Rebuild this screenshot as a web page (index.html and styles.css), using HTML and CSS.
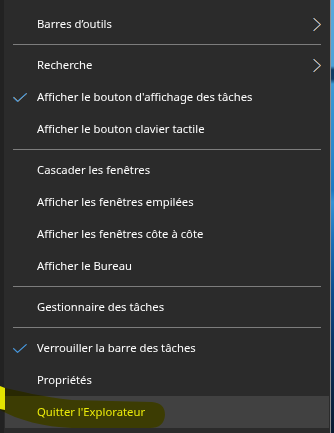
FILE: index.html
```html
<!DOCTYPE html>
<html lang="fr">
<head>
<meta charset="utf-8">
<title>Menu barre des tâches</title>
<link rel="stylesheet" href="styles.css">
</head>
<body>
<div class="screen">
  <div class="edge"></div>
  <div class="menu">
    <div class="item"><span class="icon"></span><span class="label">Barres d’outils</span>
      <svg class="chev" width="8" height="13" viewBox="0 0 8 13"><polyline class="cb" points="0.5,0.5 7,6.5 0.5,12.5"/><polyline class="co" points="1.3,0.5 7.8,6.5 1.3,12.5"/><polyline class="cw" points="0.9,0.5 7.4,6.5 0.9,12.5"/></svg>
    </div>
    <div class="sep"></div>
    <div class="item"><span class="icon"></span><span class="label">Recherche</span>
      <svg class="chev" width="8" height="13" viewBox="0 0 8 13"><polyline class="cb" points="0.5,0.5 7,6.5 0.5,12.5"/><polyline class="co" points="1.3,0.5 7.8,6.5 1.3,12.5"/><polyline class="cw" points="0.9,0.5 7.4,6.5 0.9,12.5"/></svg>
    </div>
    <div class="item"><span class="icon">
      <svg class="check" width="14" height="9" viewBox="0 0 14 9"><polyline class="ko" points="1.2,4.5 5.2,8.3 13.8,0.5"/><polyline class="kb" points="0.5,4.6 4.5,8.4 13.2,0.6"/></svg>
    </span><span class="label">Afficher le bouton d'affichage des tâches</span></div>
    <div class="item"><span class="icon"></span><span class="label">Afficher le bouton clavier tactile</span></div>
    <div class="sep"></div>
    <div class="item"><span class="icon"></span><span class="label">Cascader les fenêtres</span></div>
    <div class="item"><span class="icon"></span><span class="label">Afficher les fenêtres empilées</span></div>
    <div class="item"><span class="icon"></span><span class="label">Afficher les fenêtres côte à côte</span></div>
    <div class="item"><span class="icon"></span><span class="label">Afficher le Bureau</span></div>
    <div class="sep"></div>
    <div class="item"><span class="icon"></span><span class="label">Gestionnaire des tâches</span></div>
    <div class="sep"></div>
    <div class="item"><span class="icon">
      <svg class="check" width="14" height="9" viewBox="0 0 14 9"><polyline class="ko2" points="1.0,4.5 5.0,8.3 13.6,0.5"/><polyline class="kb" points="0.5,4.6 4.5,8.4 13.2,0.6"/></svg>
    </span><span class="label">Verrouiller la barre des tâches</span></div>
    <div class="item"><span class="icon"></span><span class="label">Propriétés</span></div>
    <div class="item hover"><span class="icon"></span><span class="label">Quitter l'Explorateur</span></div>
  </div>
  <div class="wall"></div>
  <svg class="marker" width="334" height="433" viewBox="0 0 334 433"><path d="M0,387 C20,391 42,397 72,400 L152,402 Q165,403 165,415 Q164,428 150,428 L72,428 C44,427 18,420 0,410 Z"/></svg>
  <svg class="marker-edge" width="5" height="433" viewBox="0 0 5 433"><path d="M0,386 L5,388 L5,410 L0,409 Z"/></svg>
</div>
</body>
</html>
```

FILE: styles.css
```css
html, body {
  margin: 0;
  padding: 0;
  background: #2b2b2b;
}

.screen {
  position: relative;
  display: flex;
  width: 334px;
  height: 433px;
  overflow: hidden;
  font-family: "Noto Sans", "Open Sans", "DejaVu Sans", sans-serif;
  font-size: 11.3px;
  color: #ffffff;
}

.edge {
  width: 4px;
  flex: none;
  background: #222222;
}

.menu {
  width: 326px;
  flex: none;
  background: #2b2b2b;
  border-right: 1px solid #8e8e8e;
  padding-top: 8px;
}

.wall {
  flex: 1;
  background: linear-gradient(to bottom,
    #58a9dc 0px, #4ea2d8 66px, #0d3a62 70px, #0f3d66 79px,
    #3b9ad6 84px, #2a88cc 150px, #1b78c2 190px, #3392d6 202px,
    #1a6fb8 240px, #0c4d8d 290px, #0a3566 340px, #0a2545 390px, #081a30 433px);
}

.item {
  height: 32px;
  margin: 0 1px;
  display: flex;
  align-items: center;
}

.item.hover {
  background: #414141;
}

.icon {
  width: 32px;
  flex: none;
  display: flex;
  align-items: center;
  padding-left: 8px;
  box-sizing: border-box;
}

.label {
  white-space: nowrap;
  line-height: 16px;
}

.chev {
  margin-left: auto;
  margin-right: 8px;
  display: block;
}

.chev polyline {
  fill: none;
  stroke-linecap: square;
  stroke-linejoin: miter;
}

.chev .cb { stroke: #3a8fe0; stroke-width: 0.9; }
.chev .co { stroke: #e89a3c; stroke-width: 0.9; }
.chev .cw { stroke: #e8e8f0; stroke-width: 0.6; }

.check {
  display: block;
}

.check polyline {
  fill: none;
  stroke-linecap: round;
  stroke-linejoin: round;
}

.check .ko { stroke: #e39a45; stroke-width: 1; }
.check .ko2 { stroke: #c79060; stroke-width: 0.6; opacity: 0.6; }
.check .kb { stroke: #3f9ae8; stroke-width: 1.1; }

.sep {
  height: 1px;
  margin: 4px 9px;
  background: #7d7d7d;
}

.marker {
  position: absolute;
  left: 0;
  top: 0;
  pointer-events: none;
  mix-blend-mode: multiply;
}

.marker path {
  fill: #ecec08;
}

.marker-edge {
  position: absolute;
  left: 0;
  top: 0;
  pointer-events: none;
}

.marker-edge path {
  fill: #e4e400;
}
```
